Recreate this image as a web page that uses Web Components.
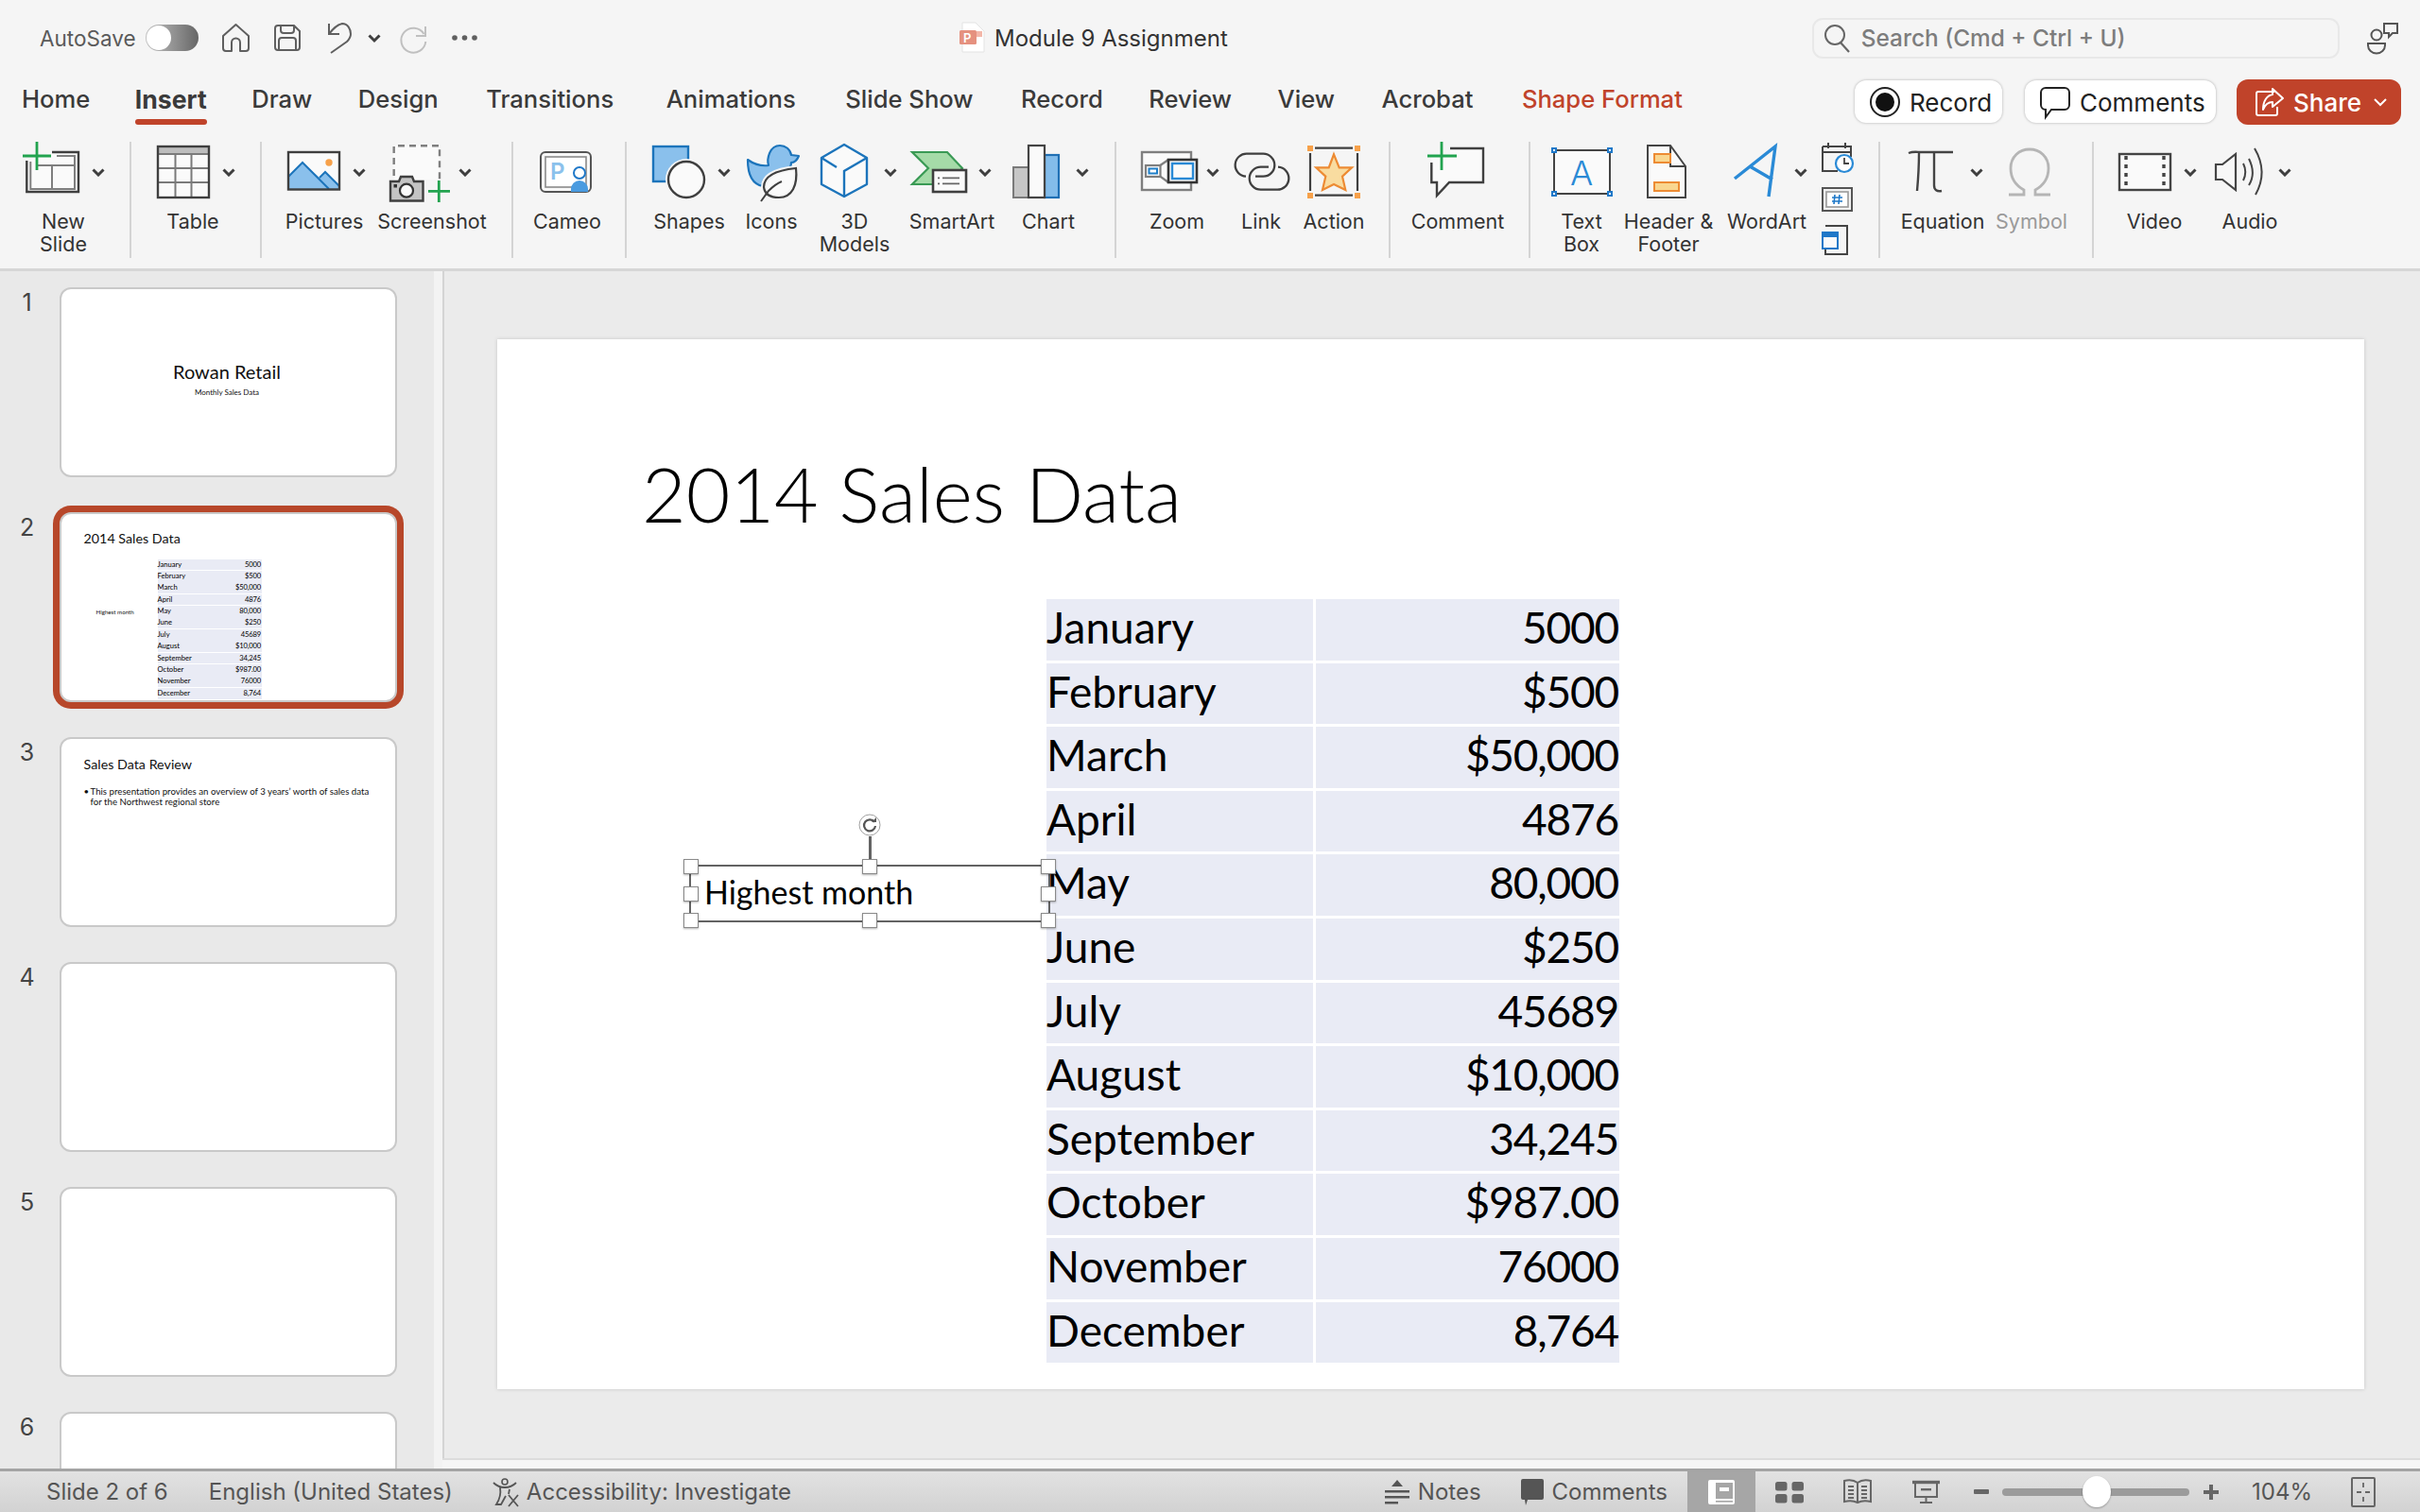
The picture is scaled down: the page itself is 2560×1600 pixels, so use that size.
<!DOCTYPE html>
<html lang="en">
<head>
<meta charset="utf-8">
<title>Module 9 Assignment</title>
<style>
html, body { margin: 0; padding: 0; overflow: hidden; background: #f5f5f5; }
svg { display: block; overflow: visible; flex: none; }
</style>
</head>
<body>
<ppt-app>
  <title-bar></title-bar>
  <ribbon-tabs>
    <tab-item>Home</tab-item>
    <tab-item active ml="-3">Insert</tab-item>
    <tab-item ml="-3">Draw</tab-item>
    <tab-item ml="-2">Design</tab-item>
    <tab-item>Transitions</tab-item>
    <tab-item ml="5">Animations</tab-item>
    <tab-item ml="2">Slide Show</tab-item>
    <tab-item>Record</tab-item>
    <tab-item ml="-2">Review</tab-item>
    <tab-item ml="-2">View</tab-item>
    <tab-item ml="-1">Acrobat</tab-item>
    <tab-item contextual ml="1">Shape Format</tab-item>
  </ribbon-tabs>
  <ribbon-bar>
    <ribbon-btn w="116" ml="9" il="15" gap="13" chev>
      <svg slot="icon" width="60" height="72" fill="none"><path d="M4.3 24V57H59V15H31" fill="#fafafa"/><path d="M31 15H59V57H4.3V24" stroke="#3f3f3f" stroke-width="2.4"/><path d="M36 19H55V54H8.3V25M14 29H55M31 29V54" stroke="#7f7f7f" stroke-width="2"/><path d="M15 4V34M0 19H30" stroke="#22a34f" stroke-width="2.8"/></svg>
      New<br>Slide
    </ribbon-btn>
    <ribbon-sep ml="12"></ribbon-sep>
    <ribbon-btn w="120" ml="5" il="22" gap="13" chev>
      <svg slot="icon" width="56" height="72" fill="none"><rect x="1" y="9" width="54" height="54" fill="#fafafa"/><rect x="1" y="9" width="54" height="8" fill="#bdbdbd"/><path d="M1 17H55M1 32H55M1 47H55M19.5 17V63M36.5 17V63" stroke="#7a7a7a" stroke-width="2"/><rect x="1" y="9" width="54" height="54" stroke="#3f3f3f" stroke-width="2.4"/></svg>
      Table
    </ribbon-btn>
    <ribbon-sep ml="11"></ribbon-sep>
    <ribbon-btn w="104" ml="14" il="13" gap="13" chev>
      <svg slot="icon" width="56" height="72" fill="none"><rect x="1" y="15" width="54" height="39.5" fill="#fafafa"/><path d="M1 41L16 26L34 42L40 36L55 51V54H1Z" fill="#8ac0ec"/><path d="M1 41L16 26L44 54M34 42L40 36L55 51" stroke="#1c74bb" stroke-width="2"/><circle cx="44" cy="26" r="3.7" fill="#f7a14a"/><rect x="1" y="15" width="54" height="39.5" stroke="#3f3f3f" stroke-width="2.4"/></svg>
      Pictures
    </ribbon-btn>
    <ribbon-btn w="124" il="17" gap="9" chev>
      <svg slot="icon" width="64" height="72" fill="none"><path d="M4.7 44V8.3H53V44" fill="#fafafa"/><path d="M4.7 40V8.3H53V44" stroke="#7f7f7f" stroke-width="2.4" stroke-dasharray="7 5"/><path d="M1 46H10L12 41H24L26 46H35.5V66.5H1Z" fill="#c4c4c4" stroke="#3f3f3f" stroke-width="2.4"/><circle cx="18" cy="55.7" r="7" fill="#fafafa" stroke="#333" stroke-width="2.2"/><rect x="4.5" y="49" width="3.5" height="3.5" fill="#333"/><path d="M52.3 45V68M41 56.3H64" stroke="#22a34f" stroke-width="2.8"/></svg>
      Screenshot
    </ribbon-btn>
    <ribbon-sep ml="22"></ribbon-sep>
    <ribbon-btn w="90" ml="12" il="16">
      <svg slot="icon" width="56" height="72" fill="none"><rect x="1" y="15" width="53" height="42" rx="5" fill="#f7f7f7" stroke="#555" stroke-width="2"/><rect x="6" y="20" width="43" height="32" fill="#fff" stroke="#8a8a8a" stroke-width="1.6"/><text x="11" y="44" font-family="Inter,sans-serif" font-size="24" font-weight="600" fill="#8bc1ec">P</text><path d="M33 57V54A9 9 0 0 1 51 54V57Z" fill="#4a9be0"/><circle cx="42" cy="37" r="6" fill="#fff" stroke="#1f78c8" stroke-width="2"/></svg>
      Cameo
    </ribbon-btn>
    <ribbon-sep ml="16"></ribbon-sep>
    <ribbon-btn w="92" ml="20" il="7" gap="14" chev>
      <svg slot="icon" width="55" height="72" fill="none"><rect x="1" y="9" width="37" height="37" fill="#8ac0ec" stroke="#1c74bb" stroke-width="2.4"/><circle cx="36" cy="44" r="22" fill="#f5f5f5"/><circle cx="36" cy="44" r="19" fill="#fafafa" stroke="#3f3f3f" stroke-width="2.4"/></svg>
      Shapes
    </ribbon-btn>
    <ribbon-btn w="70" ml="6" il="9">
      <svg slot="icon" width="55" height="72" fill="none"><path d="M1 23C8 28 15 30 23 29C21 22 24 8 35 8C41 8 46 12 47 18L55 19C53 24 50 26 47 26C47 30 45 33 43 35L17 51C6 49 1 40 1 23Z" fill="#8ac0ec" stroke="#1c74bb" stroke-width="2.2" stroke-linejoin="round"/><path d="M52 32C54 50 48 63 34 63C26 63 19 60 18 52C18 40 32 34 52 32Z" fill="#fafafa" stroke="#f5f5f5" stroke-width="6"/><path d="M52 32C54 50 48 63 34 63C26 63 19 60 18 52C18 40 32 34 52 32Z" stroke="#3f3f3f" stroke-width="2.2"/><path d="M15 67L23 56C27 52 32 48 37 46" stroke="#3f3f3f" stroke-width="2"/></svg>
      Icons
    </ribbon-btn>
    <ribbon-btn w="90" ml="8" il="9" gap="17" chev>
      <svg slot="icon" width="50" height="72" fill="none"><path d="M25 7L49 21V49L25 62L1 49V21Z" fill="#fafafa" stroke="#1c74bb" stroke-width="2.4" stroke-linejoin="round"/><path d="M1 21L17 31M49 21L25 35V62" stroke="#1c74bb" stroke-width="2.4"/></svg>
      3D<br>Models
    </ribbon-btn>
    <ribbon-btn w="100" ml="8" il="7" gap="13" chev>
      <svg slot="icon" width="58" height="72" fill="none"><path d="M1 15H38L54 32L40 49H1L18 32Z" fill="#a5dba8" stroke="#3a9a55" stroke-width="2.2"/><rect x="23" y="34" width="35" height="23" fill="#fafafa" stroke="#3f3f3f" stroke-width="2.6"/><path d="M33 42.3H51M33 48.3H51M28 42.3H30M28 48.3H30" stroke="#666" stroke-width="1.8"/></svg>
      SmartArt
    </ribbon-btn>
    <ribbon-btn w="100" ml="2" il="12" gap="17" chev>
      <svg slot="icon" width="50" height="72" fill="none"><rect x="1" y="31" width="16" height="32" fill="#c6c6c6" stroke="#7a7a7a" stroke-width="2"/><rect x="34" y="18" width="15" height="45" fill="#83bcea" stroke="#1f6fb4" stroke-width="2.2"/><rect x="17" y="8" width="17" height="55" fill="#fafafa" stroke="#444" stroke-width="2.2"/></svg>
      Chart
    </ribbon-btn>
    <ribbon-sep ml="20"></ribbon-sep>
    <ribbon-btn w="100" ml="14" il="12" gap="9" chev>
      <svg slot="icon" width="60" height="72" fill="none"><rect x="1" y="15" width="52" height="40" fill="#fafafa" stroke="#7f7f7f" stroke-width="2.4"/><path d="M20.3 29L29 23M20.3 40.7L29 47" stroke="#7f7f7f" stroke-width="2.2"/><rect x="5" y="29" width="15.5" height="12" fill="#fafafa" stroke="#7f7f7f" stroke-width="2.2"/><rect x="8.5" y="32.5" width="8.5" height="5" fill="#fff" stroke="#1f7fc8" stroke-width="2"/><rect x="29" y="23" width="30" height="24" fill="#fafafa" stroke="#333" stroke-width="2.6"/><rect x="33" y="27" width="22" height="16" stroke="#2a8ad6" stroke-width="2.4"/></svg>
      Zoom
    </ribbon-btn>
    <ribbon-btn w="70" ml="4" il="8">
      <svg slot="icon" width="56" height="72" fill="none"><path d="M11 40.7A12 12 0 0 1 12.3 16.7H29.3A12 12 0 0 1 29.3 40.7H21M45 30.7A12 12 0 0 1 43.7 54.7H26.7A12 12 0 0 1 26.7 30.7H35" stroke="#3f3f3f" stroke-width="2.3"/></svg>
      Link
    </ribbon-btn>
    <ribbon-btn w="70" ml="7" il="7">
      <svg slot="icon" width="57" height="72" fill="none"><path d="M8 10.7H48M8 60.7H48M3 16V56M53 16V56" stroke="#3f3f3f" stroke-width="2.2"/><path d="M28 17.3L33.7 31.3H47L37 40.7L40.3 55L28 49L16 55L19.3 40.7L9.3 31.3H22.7Z" fill="#f9dca0" stroke="#ed8b33" stroke-width="2.2"/><path d="M0 8h6v6h-6zM50 8h6v6h-6zM0 58h6v6h-6zM50 58h6v6h-6z" fill="#f7a14a"/></svg>
      Action
    </ribbon-btn>
    <ribbon-sep ml="23"></ribbon-sep>
    <ribbon-btn w="110" ml="16" il="23">
      <svg slot="icon" width="61" height="72" fill="none"><path d="M4 20H24V11H59V47H23L10 61V47H4Z" fill="#fafafa"/><path d="M24 11H59V47H23L10 61V47H4.3V26" stroke="#3f3f3f" stroke-width="2.4"/><path d="M15 4V34M0 19H31" stroke="#22a34f" stroke-width="2.8"/></svg>
      Comment
    </ribbon-btn>
    <ribbon-sep ml="20"></ribbon-sep>
    <ribbon-btn w="80" ml="14" il="9">
      <svg slot="icon" width="62" height="72" fill="none"><rect x="2" y="13" width="59" height="46" fill="#fafafa" stroke="#444" stroke-width="2"/><text x="31" y="50" text-anchor="middle" font-family="Inter,sans-serif" font-size="36" font-weight="300" fill="#2a8ad6">A</text><path d="M0 11h4v4h-4zM59 11h4v4h-4zM0 57h4v4h-4zM59 57h4v4h-4z" fill="#fff" stroke="#1f78c8" stroke-width="2"/></svg>
      Text<br>Box
    </ribbon-btn>
    <ribbon-btn w="104" il="29">
      <svg slot="icon" width="42" height="72" fill="none"><path d="M1 8H25L41 30V63H1Z" fill="#fafafa" stroke="#444" stroke-width="2"/><path d="M25 8V30H41" stroke="#444" stroke-width="2"/><rect x="8" y="17" width="17" height="9" fill="#f9d68f" stroke="#ed8b33" stroke-width="2"/><rect x="8" y="47" width="26" height="9" fill="#f9d68f" stroke="#ed8b33" stroke-width="2"/></svg>
      Header &amp;<br>Footer
    </ribbon-btn>
    <ribbon-btn w="92" ml="6" il="11" gap="18" chev>
      <svg slot="icon" width="46" height="72" fill="none"><path d="M1 43L44 9L37 62M17 30L41 44" stroke="#2a8ad6" stroke-width="3.4"/></svg>
      WordArt
    </ribbon-btn>
    <ribbon-stack ml="12">
      <svg width="33" height="33" fill="none"><path d="M1 5H31V16M1 5V31H17M1 11H31M7 1V7M25 1V7" stroke="#444" stroke-width="2"/><circle cx="24" cy="23" r="9" fill="#fff" stroke="#2a8ad6" stroke-width="2.2"/><path d="M24 17V23H29" stroke="#444" stroke-width="1.8"/></svg>
      <svg width="33" height="26" fill="none"><rect x="1" y="1" width="31" height="24" fill="#f2f2f2" stroke="#555" stroke-width="2"/><rect x="5" y="5" width="23" height="16" fill="#fff" stroke="#999" stroke-width="1.6"/><path d="M14 8L13 18M19 8L18 18M11 11H22M11 15H22" stroke="#1f78c8" stroke-width="1.6"/></svg>
      <svg width="33" height="32" fill="none"><path d="M4 1H27V31H4V26" stroke="#444" stroke-width="2"/><rect x="1" y="8" width="16" height="17" fill="#fafafa" stroke="#1f78c8" stroke-width="2"/><rect x="1" y="8" width="16" height="5" fill="#1f78c8"/></svg>
    </ribbon-stack>
    <ribbon-sep ml="27"></ribbon-sep>
    <ribbon-btn w="100" ml="16" il="13" gap="16" chev>
      <svg slot="icon" width="50" height="72" fill="none"><path d="M1 16C6 14 10 15 14 15H48M12 15C12 30 11 45 10 56M28 15V50C28 55 31 57 36 56" stroke="#444" stroke-width="2.4"/></svg>
      Equation
    </ribbon-btn>
    <ribbon-btn w="80" ml="4" il="15" muted>
      <svg slot="icon" width="46" height="72" fill="none"><path d="M1 60H17V55C8 50 3 42 3 32C3 20 12 12 23 12C34 12 43 20 43 32C43 42 38 50 29 55V60H45" stroke="#b5b5b5" stroke-width="2.8"/></svg>
      Symbol
    </ribbon-btn>
    <ribbon-sep ml="24"></ribbon-sep>
    <ribbon-btn w="90" ml="19" il="7" gap="13" chev>
      <svg slot="icon" width="56" height="72" fill="none"><rect x="1" y="17" width="54" height="38" fill="#fafafa" stroke="#444" stroke-width="2.4"/><path d="M8 19V53M48 19V53" stroke="#444" stroke-width="3.4" stroke-dasharray="4 5"/></svg>
      Video
    </ribbon-btn>
    <ribbon-btn w="90" ml="11" il="8" gap="15" chev>
      <svg slot="icon" width="52" height="72" fill="none"><path d="M1 28H8L22 17V55L8 44H1Z" fill="#f7f7f7" stroke="#444" stroke-width="2.2"/><path d="M30 27C33 33 33 39 30 45M36 22C41 32 41 42 36 50M42 11C52 28 52 44 43 60" stroke="#444" stroke-width="2"/></svg>
      Audio
    </ribbon-btn>
  </ribbon-bar>
  <work-area>
    <thumb-panel slot="left">
      <slide-thumb num="1">
        <mini-title></mini-title>
      </slide-thumb>
      <slide-thumb num="2" selected>
        <mini-data></mini-data>
      </slide-thumb>
      <slide-thumb num="3">
        <mini-review></mini-review>
      </slide-thumb>
      <slide-thumb num="4"></slide-thumb>
      <slide-thumb num="5"></slide-thumb>
      <slide-thumb num="6"></slide-thumb>
    </thumb-panel>
    <slide-canvas></slide-canvas>
  </work-area>
  <status-bar></status-bar>
</ppt-app>

<script>
const SALES = [
  ['January', '5000'], ['February', '$500'], ['March', '$50,000'], ['April', '4876'],
  ['May', '80,000'], ['June', '$250'], ['July', '45689'], ['August', '$10,000'],
  ['September', '34,245'], ['October', '$987.00'], ['November', '76000'], ['December', '8,764']
];
const UI_FONT = "Inter, 'Liberation Sans', sans-serif";
const SLIDE_FONT = "Lato, 'Open Sans', sans-serif";

class BaseEl extends HTMLElement {
  constructor() {
    super();
    this.attachShadow({ mode: 'open' });
  }
  connectedCallback() {
    this.shadowRoot.innerHTML = this.render();
  }
}

class PptApp extends BaseEl {
  render() {
    return `<style>
      :host { display: flex; flex-direction: column; width: 2560px; height: 1600px; background: #f5f5f5;
        font-family: ${UI_FONT}; color: #333; overflow: hidden; }
    </style><slot></slot>`;
  }
}

class TitleBar extends BaseEl {
  render() {
    return `<style>
      :host { display: flex; align-items: center; height: 80px; flex: none; box-sizing: border-box; padding-left: 42px; }
      .auto { font-size: 22.5px; color: #5a5a5a; width: 112px; }
      .toggle { width: 56px; height: 28px; border-radius: 14px; background: linear-gradient(90deg, #c4c4c4, #666);
        display: flex; align-items: center; padding-left: 1px; box-sizing: border-box; }
      .toggle i { width: 26px; height: 26px; border-radius: 50%; background: #fff; }
      .file { margin-left: 510px; display: flex; align-items: center; gap: 11px; font-size: 24px; color: #333; }
      .search { margin-left: 618px; width: 558px; height: 43px; box-sizing: border-box; border: 2px solid #e8e8e8; border-radius: 11px;
        display: flex; align-items: center; gap: 13px; padding-left: 11px; font-size: 24.4px; font-weight: 500; color: #7d7d7d; }
      svg { display: block; overflow: visible; flex: none; }
    </style>
    <div class="auto">AutoSave</div>
    <div class="toggle"><i></i></div>
    <svg style="margin-left:25px" width="29" height="30" fill="none"><path d="M10 29H4A3 3 0 0 1 1 26V13L14.5 1L28 13V26A3 3 0 0 1 25 29H19V20A4.5 4.5 0 0 0 10 20Z" stroke="#5f5f5f" stroke-width="2" stroke-linejoin="round"/></svg>
    <svg style="margin-left:26px" width="28" height="28" fill="none"><path d="M4 1H21L27 7V24A3 3 0 0 1 24 27H4A3 3 0 0 1 1 24V4A3 3 0 0 1 4 1ZM7 1V6A3 3 0 0 0 10 9H18A3 3 0 0 0 21 6V2M5 27V17A3 3 0 0 1 8 14H20A3 3 0 0 1 23 17V27" stroke="#5f5f5f" stroke-width="2"/></svg>
    <svg style="margin-left:28px" width="26" height="32" fill="none"><path d="M2 1V12H13M2 12C6 7 10 2 16 1C22 1 25 7 25 12C25 15 23 18 21 20L4 32" stroke="#5f5f5f" stroke-width="2"/></svg>
    <svg style="margin-left:17px" width="14" height="9" fill="none"><path d="M1.5 1.5L7 7L12.5 1.5" stroke="#3f3f3f" stroke-width="3"/></svg>
    <svg style="margin-left:21px" width="28" height="30" fill="none"><path d="M26 3V13H16M24.5 11A13 13 0 1 0 26.3 19" stroke="#c0c0c0" stroke-width="2"/></svg>
    <svg style="margin-left:26px" width="27" height="6"><circle cx="3" cy="3" r="2.8" fill="#5f5f5f"/><circle cx="13.5" cy="3" r="2.8" fill="#5f5f5f"/><circle cx="24" cy="3" r="2.8" fill="#5f5f5f"/></svg>
    <div class="file">
      <svg width="26" height="32"><path d="M3 0H17L26 9V31H3Z" fill="#fff" stroke="#e3e3e3"/><rect x="0" y="8" width="18" height="15" rx="1.5" fill="#e5917f"/><text x="4" y="20.5" font-family="Inter,sans-serif" font-size="13" font-weight="600" fill="#fff">P</text><path d="M18 9H24V15H18Z" fill="#f3b7a9"/></svg>
      <span>Module 9 Assignment</span>
    </div>
    <div class="search">
      <svg width="26" height="30" fill="none"><circle cx="11" cy="12" r="10" stroke="#666" stroke-width="2"/><path d="M17 20L26 30" stroke="#666" stroke-width="2.2"/></svg>
      <span>Search (Cmd + Ctrl + U)</span>
    </div>
    <svg style="margin-left:29px" width="33" height="33" fill="none"><circle cx="10" cy="13" r="5.5" stroke="#555" stroke-width="2"/><path d="M1 22H19V24A9 8.5 0 0 1 1 24Z" stroke="#555" stroke-width="2"/><path d="M18 1H32V11H27L23 15V11H18Z" fill="#f5f5f5" stroke="#555" stroke-width="2"/></svg>`;
  }
}

class RibbonTabs extends BaseEl {
  render() {
    return `<style>
      :host { display: flex; height: 60px; flex: none; box-sizing: border-box; padding-left: 23px; padding-right: 20px; gap: 50.5px; align-items: flex-start; }
      .right { margin-left: auto; display: flex; gap: 24px; margin-top: 5px; }
      .btn { height: 45px; box-sizing: border-box; border-radius: 12px; background: #fff; box-shadow: 0 0 3px rgba(0,0,0,.3);
        display: flex; align-items: center; font-size: 26px; color: #222; gap: 10px; padding-top: 1px; }
      .btn svg { margin-top: -1px; }
      .rec { width: 156px; padding-left: 16px; }
      .com { width: 202px; padding-left: 16px; }
      .share { width: 174px; height: 48px; margin-top: -1px; margin-left: -2px; padding-left: 20px; background: #c0432a; color: #fff; font-weight: 500; box-shadow: none; }
      svg { display: block; overflow: visible; flex: none; }
    </style>
    <slot></slot>
    <div class="right">
      <div class="btn rec"><svg width="32" height="32" fill="none"><circle cx="16" cy="16" r="15" stroke="#222" stroke-width="2"/><circle cx="16" cy="16" r="10" fill="#111"/></svg>Record</div>
      <div class="btn com"><svg width="32" height="32" fill="none"><path d="M6 1H26A5 5 0 0 1 31 6V19A5 5 0 0 1 26 24H12L6 32V24A5 5 0 0 1 1 19V6A5 5 0 0 1 6 1Z" stroke="#222" stroke-width="2"/></svg>Comments</div>
      <div class="btn share"><svg width="30" height="30" fill="none"><path d="M20 4H3A2 2 0 0 0 1 6V27A2 2 0 0 0 3 29H21A2 2 0 0 0 23 27V20" stroke="#fff" stroke-width="2"/><path d="M18 1L29 11L18 20V15C13 15 10 18 8 23C8 14 12 8 18 7Z" stroke="#fff" stroke-width="2" stroke-linejoin="round"/></svg>Share<svg style="margin-left:3px" width="14" height="8" fill="none"><path d="M1 1L7 7L13 1" stroke="#fff" stroke-width="2"/></svg></div>
    </div>`;
  }
}

class TabItem extends BaseEl {
  render() {
    const active = this.hasAttribute('active');
    const ctx = this.hasAttribute('contextual');
    return `<style>
      :host { display: block; position: relative; margin: 2px 0 0 ${this.getAttribute('ml') || 0}px; font-size: ${active ? 26.6 : 25.6}px; line-height: 46px; white-space: nowrap;
        font-weight: ${active ? 700 : 500}; color: ${ctx ? '#c0432a' : '#3a3a3a'}; }
      .bar { position: absolute; left: 0; right: 0; top: 44px; height: 6px; border-radius: 3px; background: #c0432a; display: ${active ? 'block' : 'none'}; }
    </style><slot></slot><div class="bar"></div>`;
  }
}

class RibbonBar extends BaseEl {
  render() {
    return `<style>
      :host { display: flex; align-items: flex-start; height: 147px; flex: none; box-sizing: border-box; padding-top: 6px; border-bottom: 3px solid #d6d6d6; }
    </style><slot></slot>`;
  }
}

class RibbonBtn extends BaseEl {
  render() {
    const a = n => this.getAttribute(n) || 0;
    const chev = this.hasAttribute('chev')
      ? `<svg class="chev" width="14" height="9" fill="none" style="margin-left:${a('gap')}px"><path d="M1.5 1.5L7 7L12.5 1.5" stroke="#3f3f3f" stroke-width="3"/></svg>` : '';
    return `<style>
      :host { display: block; flex: none; width: ${a('w')}px; margin-left: ${a('ml')}px; }
      .top { height: 72px; display: flex; align-items: center; padding-left: ${a('il')}px; box-sizing: border-box; }
      .chev { display: block; flex: none; margin-top: 0; }
      .label { margin-top: 4px; text-align: center; font-size: 21.5px; line-height: 24px; white-space: nowrap;
        color: ${this.hasAttribute('muted') ? '#9a9a9a' : '#333'}; }
    </style>
    <div class="top"><slot name="icon"></slot>${chev}</div>
    <div class="label"><slot></slot></div>`;
  }
}

class RibbonSep extends BaseEl {
  render() {
    return `<style>
      :host { display: block; flex: none; width: 2px; height: 123px; margin: 4px 0 0 ${this.getAttribute('ml')}px; background: #d4d4d4; }
    </style>`;
  }
}

class RibbonStack extends BaseEl {
  render() {
    return `<style>
      :host { display: flex; flex-direction: column; flex: none; width: 33px; height: 120px; margin: 4px 0 0 ${this.getAttribute('ml')}px; justify-content: space-between; }
    </style><slot></slot>`;
  }
}

class WorkArea extends BaseEl {
  render() {
    return `<style>
      :host { display: flex; flex: 1; min-height: 0; }
    </style><slot name="left"></slot><slot></slot>`;
  }
}

class ThumbPanel extends BaseEl {
  render() {
    return `<style>
      :host { display: flex; flex-direction: column; gap: 37.5px; flex: none; width: 459px; height: 100%; box-sizing: border-box;
        padding-top: 17px; background: #e9e9e9; overflow: hidden; }
    </style><slot></slot>`;
  }
}

class SlideThumb extends BaseEl {
  render() {
    const sel = this.hasAttribute('selected');
    return `<style>
      :host { display: block; position: relative; flex: none; margin-left: 62.5px; width: 357px; height: 200.5px; }
      .num { position: absolute; left: -44px; top: 1px; width: 20px; font-size: 25px; line-height: 30px; color: #444; text-align: center; }
      .card { width: 100%; height: 100%; box-sizing: border-box; background: #fff; border: 2px solid #c9c9c9; border-radius: 12px; overflow: hidden;
        ${sel ? 'box-shadow: 0 0 0 7px #b7472a;' : ''} }
    </style>
    <div class="num">${this.getAttribute('num')}</div>
    <div class="card"><slot></slot></div>`;
  }
}

class MiniTitle extends BaseEl {
  render() {
    return `<style>
      :host { display: flex; flex-direction: column; align-items: center; height: 100%; font-family: ${SLIDE_FONT}; color: #111; padding-top: 75px; box-sizing: border-box; margin-left: -2px; }
      .a { font-size: 20px; line-height: 24px; }
      .b { font-size: 8px; line-height: 12px; margin-top: 4px; }
    </style><div class="a">Rowan Retail</div><div class="b">Monthly Sales Data</div>`;
  }
}

class MiniData extends BaseEl {
  render() {
    return `<style>
      :host { display: block; position: relative; height: 100%; box-sizing: border-box; padding: 17px 0 0 24px; font-family: ${SLIDE_FONT}; color: #111; }
      .t { font-size: 14.3px; line-height: 18px; }
      sales-table { margin: 12.5px 0 0 78px; --row: 11.8px; --fs: 7.6px; --c1: 51px; --c2: 59px; --gap: .6px; --pad: 1px; --nls: -.15px; }
      .hm { position: absolute; left: 37px; top: 99px; font-size: 6.2px; line-height: 9px; }
    </style>
    <div class="t">2014 Sales Data</div>
    <sales-table></sales-table>
    <div class="hm">Highest month</div>`;
  }
}

class MiniReview extends BaseEl {
  render() {
    return `<style>
      :host { display: block; height: 100%; box-sizing: border-box; padding: 18px 0 0 24px; font-family: ${SLIDE_FONT}; color: #111; }
      .t { font-size: 14.3px; line-height: 18px; }
      .l { position: relative; margin-top: 14px; padding-left: 7px; font-size: 9.7px; line-height: 11px; white-space: nowrap; }
      .l::before { content: "\\2022"; position: absolute; left: 0; }
    </style>
    <div class="t">Sales Data Review</div>
    <div class="l">This presentation provides an overview of 3 years’ worth of sales data<br>for the Northwest regional store</div>`;
  }
}

class SalesTable extends BaseEl {
  render() {
    const rows = SALES.map(r => `<div class="c">${r[0]}</div><div class="c n">${r[1]}</div>`).join('');
    return `<style>
      :host { display: grid; width: fit-content; grid-template-columns: var(--c1) var(--c2); grid-auto-rows: var(--row);
        gap: var(--gap); font-size: var(--fs); }
      .c { background: #e9ebf5; color: #000; line-height: calc(var(--row) - var(--lift, 0px)); white-space: nowrap; }
      .n { text-align: right; padding-right: var(--pad); letter-spacing: var(--nls, 0); }
    </style>${rows}`;
  }
}

class SlideCanvas extends BaseEl {
  render() {
    return `<style>
      :host { display: flex; flex-direction: column; flex: 1; min-width: 0; box-sizing: border-box; background: #ebebeb;
        border-left: 9px solid #f3f3f3; position: relative; }
      .inner { flex: 1; min-height: 0; padding: 72px 0 0 58px; box-shadow: inset 2px 0 0 #d4d4d4; }
      .page { position: relative; width: 1975px; height: 1111px; box-sizing: border-box; background: #fff; padding: 113px 0 0 153px;
        box-shadow: 0 0 4px rgba(0,0,0,.16); font-family: ${SLIDE_FONT}; color: #000; }
      h1 { margin: 0; font-size: 80.5px; font-weight: 300; line-height: 100px; white-space: nowrap; }
      sales-table { margin: 62px 0 0 428px; --row: 64.6px; --fs: 46px; --c1: 282px; --c2: 321px; --gap: 3px; --pad: 1px; --nls: -1.2px; --lift: 4px; }
      .foot { flex: none; height: 9px; background: #f6f6f6; border-top: 2px solid #dcdcdc; }
    </style>
    <div class="inner">
      <div class="page">
        <h1>2014 Sales Data</h1>
        <sales-table></sales-table>
        <sel-box>Highest month</sel-box>
      </div>
    </div>
    <div class="foot"></div>`;
  }
}

class SelBox extends BaseEl {
  render() {
    const spots = [[0, 0], [50, 0], [100, 0], [0, 50], [100, 50], [0, 100], [50, 100], [100, 100]];
    const handles = spots.map(s => `<i style="left:${s[0]}%;top:${s[1]}%"></i>`).join('');
    return `<style>
      :host { position: absolute; left: 203px; top: 556px; width: 382px; height: 61px; box-sizing: border-box; border: 2.5px solid #636363;
        display: flex; align-items: center; padding: 0 0 5px 14px; font-size: 34px; color: #000; z-index: 2; }
      i { position: absolute; width: 16px; height: 16px; margin: -8px 0 0 -8px; background: #fff; border: 1px solid #8a8a8a; box-sizing: border-box; box-shadow: 0 1px 2px rgba(0,0,0,.3); }
      .stem { position: absolute; left: 50%; top: -32px; width: 2.5px; height: 24px; margin-left: -1px; background: #636363; }
      .rot { position: absolute; left: 50%; top: -56px; margin-left: -12px; }
    </style>
    <slot></slot>
    <div class="stem"></div>
    <svg class="rot" width="24" height="24" fill="none"><circle cx="12" cy="12" r="11" fill="#fff" stroke="#a0a0a0"/><path d="M17 9A6 6 0 1 0 18 13" stroke="#555" stroke-width="2.2"/><path d="M14 9H19V4Z" fill="#555"/></svg>
    ${handles}`;
  }
}

class StatusBar extends BaseEl {
  render() {
    return `<style>
      :host { display: flex; align-items: center; height: 46px; flex: none; box-sizing: border-box; padding: 0 47px 0 49px;
        background: linear-gradient(#e2e2e2, #d2d2d2); border-top: 3px solid #a4a4a4; font-size: 24px; color: #555; white-space: nowrap; }
      .ml43 { margin-left: 43px; }
      .right { margin-left: auto; display: flex; align-items: center; height: 100%; }
      .v { width: 72px; height: 100%; display: flex; align-items: center; justify-content: center; }
      .v.on { background: #a6a6a6; }
      .slider { margin-left: 14px; width: 198px; height: 8px; border-radius: 4px; background: #9b9b9b; display: flex; align-items: center; padding-left: 85px; box-sizing: border-box; }
      .slider i { width: 30px; height: 33px; border-radius: 50%; background: #fff; box-shadow: 0 1px 2px rgba(0,0,0,.3); flex: none; }
      svg { display: block; overflow: visible; flex: none; }
    </style>
    <span>Slide 2 of 6</span>
    <span class="ml43">English (United States)</span>
    <svg style="margin:0 7px 0 41px" width="30" height="30" fill="none"><circle cx="14" cy="4" r="3" stroke="#555" stroke-width="1.6"/><path d="M2 5C6 9 10 10 14 10C18 10 22 9 26 5M9 10C10 16 9 22 5 28L10 28L15 19M19 12L18 17M18 18L28 30M28 18L18 30" stroke="#555" stroke-width="1.8"/></svg>
    <span>Accessibility: Investigate</span>
    <div class="right">
      <svg width="28" height="26" fill="#555"><path d="M14 0L20 7H8Z"/><path d="M1 11H27V13.5H1ZM1 17H27V19.5H1ZM1 23H15V25.5H1Z"/></svg>
      <span style="margin-left:8px">Notes</span>
      <svg style="margin-left:41px" width="26" height="28" fill="#555"><path d="M3 0H23A2 2 0 0 1 25 2V20A2 2 0 0 1 23 22H8L6 28L5 22H3A2 2 0 0 1 1 20V2A2 2 0 0 1 3 0Z"/></svg>
      <span style="margin-left:8px">Comments</span>
      <div class="v on" style="margin-left:21px"><svg width="28" height="26"><rect width="28" height="26" rx="2" fill="#fff"/><rect x="8" y="3" width="18" height="17" fill="#a6a6a6"/><rect x="12" y="8" width="10" height="4" fill="#fff"/><rect x="8" y="22" width="18" height="1.6" fill="#a6a6a6"/></svg></div>
      <div class="v"><svg width="30" height="22" fill="#666"><rect width="12.5" height="9.5" rx="2.5"/><rect x="17.5" width="12.5" height="9.5" rx="2.5"/><rect y="13" width="12.5" height="9.5" rx="2.5"/><rect x="17.5" y="13" width="12.5" height="9.5" rx="2.5"/></svg></div>
      <div class="v"><svg width="30" height="27" fill="none"><path d="M15 4C11 1 5 1 1 2V24C5 23 11 23 15 25C19 23 25 23 29 24V2C25 1 19 1 15 4ZM15 4V25M5 8H11M5 12H11M5 16H11M5 20H11M19 8H25M19 12H25M19 16H25M19 20H25" stroke="#666" stroke-width="2"/></svg></div>
      <div class="v"><svg width="29" height="24" fill="none"><path d="M0 1.5H29" stroke="#666" stroke-width="3.4"/><path d="M3 3V17H26V3M14.5 17V22M8 23H21" stroke="#666" stroke-width="2"/><rect x="9" y="8" width="11" height="2.4" fill="#666"/></svg></div>
      <svg style="margin-left:15px" width="16" height="6"><rect width="16" height="5" rx="1" fill="#666"/></svg>
      <div class="slider"><i></i></div>
      <svg style="margin-left:15px" width="16" height="16" fill="#666"><path d="M6 0H10V6H16V10H10V16H6V10H0V6H6Z"/></svg>
      <span style="margin-left:35px">104%</span>
      <svg style="margin-left:41px" width="26" height="32" fill="none"><rect x="1" y="1" width="24" height="30" rx="1" stroke="#666" stroke-width="2"/><path d="M13 6V11M13 21V26M6 16H11M15 16H20" stroke="#666" stroke-width="1.8"/></svg>
    </div>`;
  }
}

customElements.define('sales-table', SalesTable);
customElements.define('sel-box', SelBox);
customElements.define('tab-item', TabItem);
customElements.define('ribbon-btn', RibbonBtn);
customElements.define('ribbon-sep', RibbonSep);
customElements.define('ribbon-stack', RibbonStack);
customElements.define('mini-title', MiniTitle);
customElements.define('mini-data', MiniData);
customElements.define('mini-review', MiniReview);
customElements.define('slide-thumb', SlideThumb);
customElements.define('thumb-panel', ThumbPanel);
customElements.define('slide-canvas', SlideCanvas);
customElements.define('work-area', WorkArea);
customElements.define('title-bar', TitleBar);
customElements.define('ribbon-tabs', RibbonTabs);
customElements.define('ribbon-bar', RibbonBar);
customElements.define('status-bar', StatusBar);
customElements.define('ppt-app', PptApp);
</script>
</body>
</html>
